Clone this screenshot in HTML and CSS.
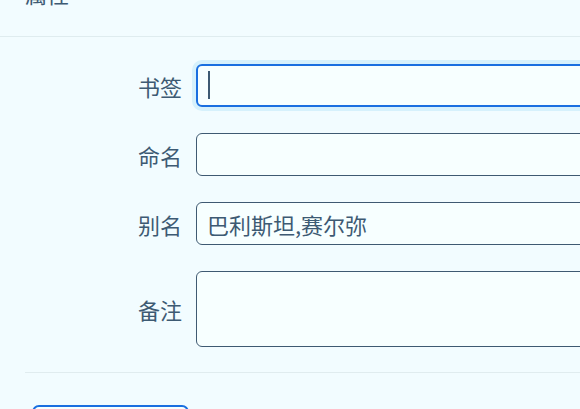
FILE: index.html
```html
<!DOCTYPE html>
<html lang="zh">
<head>
<meta charset="utf-8">
<link rel="stylesheet" href="styles.css">
</head>
<body>
<div class="dialog">
  <div class="dialog-header"><h2 class="title">属性</h2></div>
  <form class="form">
    <label class="label" for="f1">书签</label>
    <span class="field-wrap">
      <input id="f1" class="field field-focus" type="text" value="">
      <span class="caret"></span>
    </span>
    <label class="label" for="f2">命名</label>
    <input id="f2" class="field" type="text" value="">
    <label class="label" for="f3">别名</label>
    <input id="f3" class="field" type="text" value="巴利斯坦,赛尔弥">
    <label class="label" for="f4">备注</label>
    <textarea id="f4" class="field area"></textarea>
  </form>
  <div class="dialog-footer">
    <button class="btn" type="button"></button>
  </div>
</div>
</body>
</html>
```
FILE: styles.css
```css
html, body {
  margin: 0;
  padding: 0;
  background: #f2fcff;
  overflow: hidden;
  font-family: "Noto Sans CJK SC", "Noto Sans", sans-serif;
  color: #3d5a73;
}
.dialog {
  width: 640px;
}
.dialog-header {
  height: 36px;
  border-bottom: 1px solid #dfecef;
  overflow: hidden;
}
.title {
  margin: 0;
  padding-left: 25px;
  font-size: 22px;
  font-weight: 400;
  line-height: 30px;
  margin-top: -22px;
  color: #3d5a73;
}
.form {
  display: grid;
  grid-template-columns: 182px 420px;
  column-gap: 14px;
  row-gap: 26px;
  align-items: center;
  padding: 27px 0 25px 0;
}
.label {
  text-align: right;
  font-size: 22px;
  line-height: 30px;
  color: #3d5a73;
}
.field-wrap {
  position: relative;
  display: block;
}
.field {
  display: block;
  box-sizing: border-box;
  width: 420px;
  height: 43px;
  margin: 0;
  padding: 0 10px;
  border: 1.5px solid #3f5a72;
  border-radius: 6px;
  background: #f7ffff;
  font-family: "Noto Sans CJK SC", "Noto Sans", sans-serif;
  font-size: 22px;
  color: #3d5a73;
  outline: none;
}
.field-focus {
  border: 2px solid #1a6fe0;
  box-shadow: 0 0 0 4px #d6f1fc;
}
.caret {
  position: absolute;
  left: 12px;
  top: 7px;
  width: 2px;
  height: 28px;
  background: #3d5a73;
}
.area {
  height: 76px;
  resize: none;
  padding-top: 8px;
}
.dialog-footer {
  margin-left: 25px;
  border-top: 1.5px solid #e0ecef;
  padding-top: 32px;
}
.btn {
  display: block;
  margin-left: 7px;
  width: 157px;
  height: 40px;
  border: 2px solid #1a6fe0;
  border-radius: 7px;
  background: #f7ffff;
  padding: 0;
}
```
